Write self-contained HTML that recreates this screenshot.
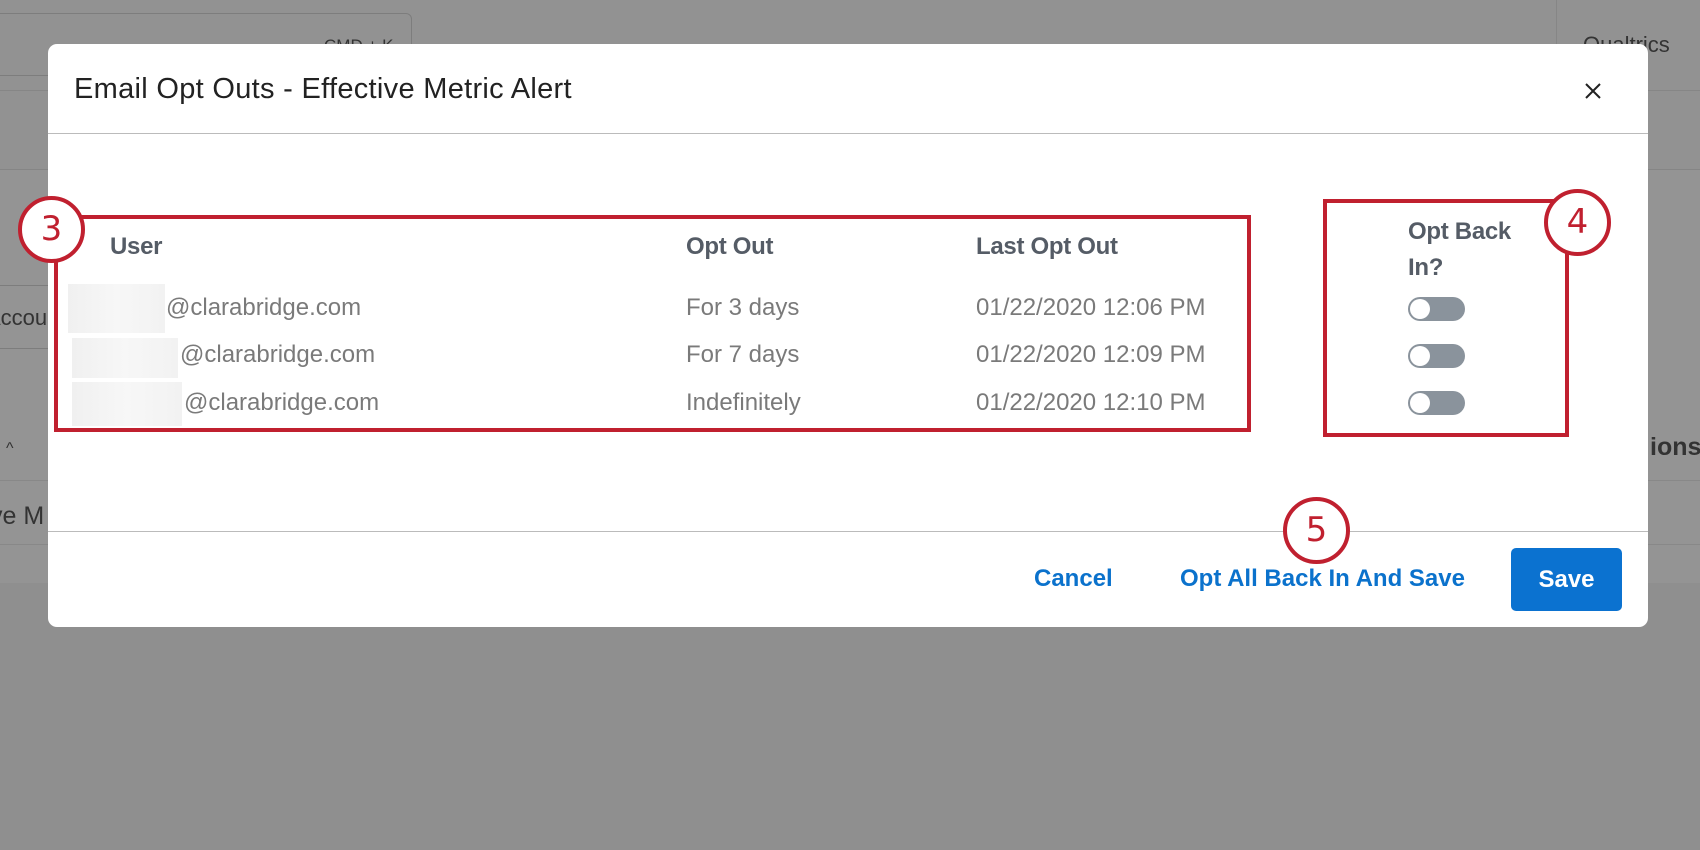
<!DOCTYPE html>
<html><head><meta charset="utf-8"><style>
*{box-sizing:border-box;margin:0;padding:0}
body{width:1700px;height:850px;overflow:hidden;background:#8f8f8f;font-family:"Liberation Sans",sans-serif;position:relative}
.abs{position:absolute}
.modal{left:48px;top:44px;width:1600px;height:583px;background:#fff;border-radius:9px}
.txt{font-size:24px;color:#7a7a7a;white-space:nowrap}
.hd{font-size:24px;color:#555c66;font-weight:bold;white-space:nowrap;letter-spacing:-0.3px}
.red{border:4px solid #c0202f}
.circ{width:67px;height:67px;border:4px solid #c0202f;border-radius:50%;background:#fff;color:#c0202f;font-size:34px;text-align:center;line-height:58px;font-family:"DejaVu Sans",sans-serif}
.tog{width:57px;height:24px;border-radius:12px;background:#8a939c}
.tog:after{content:"";position:absolute;left:2px;top:2px;width:20px;height:20px;border-radius:50%;background:#fff}
.blur{background:linear-gradient(90deg,#f0f0f0,#f7f7f7,#f2f2f2)}
.blue{color:#0b72cc;font-weight:bold;font-size:24px;white-space:nowrap}
</style></head><body>
<div class="abs" style="left:0;top:0;width:1700px;height:170px;background:#929292;border-bottom:1px solid #858585"></div>
<div class="abs" style="left:-10px;top:13px;width:422px;height:63px;border:1px solid #7d7d7d;border-radius:6px"></div>
<div class="abs" style="left:324px;top:36px;font-size:17px;color:#333">CMD + K</div>
<div class="abs" style="left:0;top:90px;width:1700px;height:1px;background:#868686"></div>
<div class="abs" style="left:1556px;top:0;width:1px;height:170px;background:#868686"></div>
<div class="abs" style="left:1583px;top:32px;font-size:22px;color:#333">Qualtrics</div>
<div class="abs" style="left:0;top:170px;width:1700px;height:413px;background:#949494"></div>
<div class="abs" style="left:-14px;top:305px;font-size:22px;color:#333">Accou</div>
<div class="abs" style="left:0;top:285px;width:60px;height:1px;background:#7d7d7d"></div>
<div class="abs" style="left:0;top:348px;width:60px;height:1px;background:#7d7d7d"></div>
<div class="abs" style="left:6px;top:440px;font-size:16px;color:#333">^</div>
<div class="abs" style="left:0;top:480px;width:1700px;height:1px;background:#888"></div>
<div class="abs" style="left:-10px;top:502px;font-size:25px;color:#333">ve M</div>
<div class="abs" style="left:0;top:544px;width:1700px;height:1px;background:#888"></div>
<div class="abs" style="left:1650px;top:433px;font-size:25px;font-weight:bold;color:#333">ions</div>

<div class="abs modal"></div>
<div class="abs" style="left:74px;top:73px;font-size:29px;color:#222;letter-spacing:0.3px">Email Opt Outs - Effective Metric Alert</div>
<svg class="abs" style="left:1583px;top:81px" width="20" height="20"><path d="M3 3L17 17M17 3L3 17" stroke="#222" stroke-width="2"/></svg>
<div class="abs" style="left:48px;top:133px;width:1600px;height:1px;background:#bbb"></div>
<div class="abs" style="left:48px;top:531px;width:1600px;height:1px;background:#bbb"></div>

<div class="abs red" style="left:54px;top:215px;width:1197px;height:217px"></div>
<div class="abs hd" style="left:110px;top:233px">User</div>
<div class="abs hd" style="left:686px;top:233px">Opt Out</div>
<div class="abs hd" style="left:976px;top:233px">Last Opt Out</div>
<div class="abs blur" style="left:68px;top:284px;width:97px;height:49px"></div>
<div class="abs blur" style="left:72px;top:338px;width:106px;height:40px"></div>
<div class="abs blur" style="left:72px;top:382px;width:110px;height:44px"></div>
<div class="abs txt" style="left:166px;top:294px">@clarabridge.com</div>
<div class="abs txt" style="left:180px;top:341px">@clarabridge.com</div>
<div class="abs txt" style="left:184px;top:389px">@clarabridge.com</div>
<div class="abs txt" style="left:686px;top:294px">For 3 days</div>
<div class="abs txt" style="left:686px;top:341px">For 7 days</div>
<div class="abs txt" style="left:686px;top:389px">Indefinitely</div>
<div class="abs txt" style="left:976px;top:294px">01/22/2020 12:06 PM</div>
<div class="abs txt" style="left:976px;top:341px">01/22/2020 12:09 PM</div>
<div class="abs txt" style="left:976px;top:389px">01/22/2020 12:10 PM</div>
<div class="abs circ" style="left:18px;top:196px">3</div>

<div class="abs red" style="left:1323px;top:199px;width:246px;height:238px"></div>
<div class="abs hd" style="left:1408px;top:214px;line-height:36px">Opt Back<br>In?</div>
<div class="abs tog" style="left:1408px;top:297px"></div>
<div class="abs tog" style="left:1408px;top:344px"></div>
<div class="abs tog" style="left:1408px;top:391px"></div>
<div class="abs circ" style="left:1544px;top:189px">4</div>

<div class="abs circ" style="left:1283px;top:497px">5</div>
<div class="abs blue" style="left:1034px;top:565px">Cancel</div>
<div class="abs blue" style="left:1180px;top:565px">Opt All Back In And Save</div>
<div class="abs" style="left:1511px;top:548px;width:111px;height:63px;background:#0b72d0;border-radius:5px;color:#fff;font-weight:bold;font-size:24px;text-align:center;line-height:63px">Save</div>
</body></html>
